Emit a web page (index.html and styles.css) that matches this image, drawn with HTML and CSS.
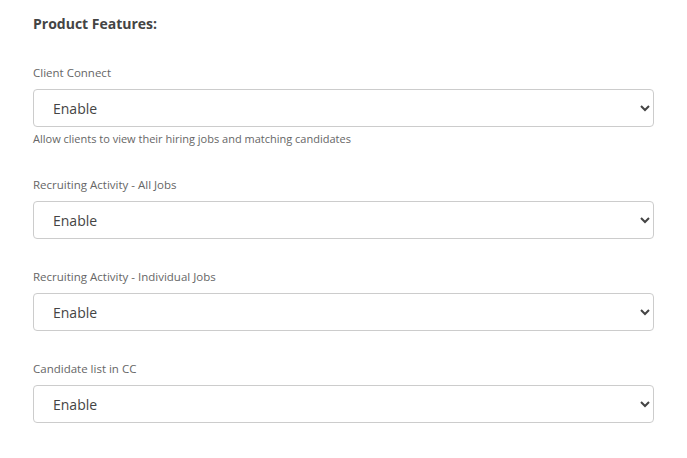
FILE: index.html
```html
<!DOCTYPE html>
<html>
<head>
<meta charset="utf-8">
<link rel="stylesheet" href="styles.css">
</head>
<body>
<div class="page">
  <div class="title">Product Features:</div>
  <div class="field">
    <label class="label">Client Connect</label>
    <select class="select"><option>Enable</option><option>Disable</option></select>
    <div class="help">Allow clients to view their hiring jobs and matching candidates</div>
  </div>
  <div class="field">
    <label class="label">Recruiting Activity - All Jobs</label>
    <select class="select"><option>Enable</option><option>Disable</option></select>
  </div>
  <div class="field">
    <label class="label">Recruiting Activity - Individual Jobs</label>
    <select class="select"><option>Enable</option><option>Disable</option></select>
  </div>
  <div class="field">
    <label class="label">Candidate list in CC</label>
    <select class="select"><option>Enable</option><option>Disable</option></select>
  </div>
</div>
</body>
</html>
```
FILE: styles.css
```css
html, body {
  margin: 0;
  padding: 0;
  background: #fff;
}
body {
  font-family: "Open Sans", "Liberation Sans", sans-serif;
}
.page {
  padding: 14px 33px 0 33px;
  width: 621px;
  display: flex;
  flex-direction: column;
  gap: 30px;
}
.title {
  font-size: 14px;
  font-weight: 700;
  line-height: 20px;
  color: #444;
  margin-bottom: 1px;
}
.field {
  display: flex;
  flex-direction: column;
}
.label {
  font-size: 11.5px;
  line-height: 16px;
  color: #666;
  margin-bottom: 8px;
}
.select {
  box-sizing: border-box;
  width: 621px;
  height: 38px;
  border: 1px solid #ccc;
  border-radius: 4px;
  background-color: #fff;
  font-family: "Open Sans", "Liberation Sans", sans-serif;
  font-size: 14px;
  color: #444;
  padding: 0 10px 0 15px;
  outline: none;
}
.help {
  font-size: 11px;
  line-height: 16px;
  color: #666;
  margin-top: 4px;
}
```
